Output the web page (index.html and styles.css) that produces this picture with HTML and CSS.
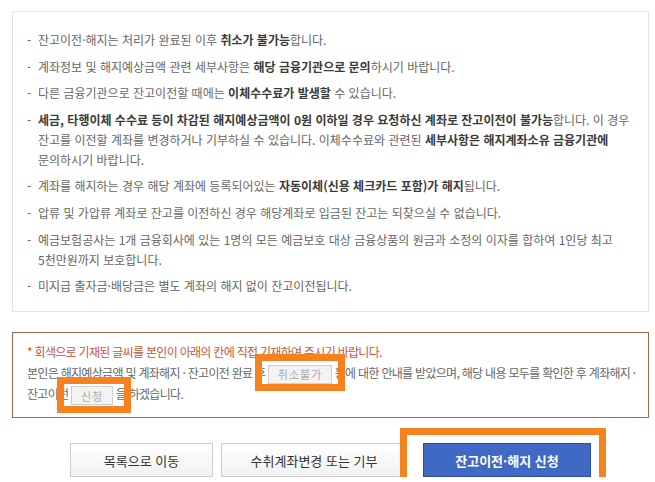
FILE: index.html
```html
<!DOCTYPE html>
<html lang="ko">
<head>
    <meta charset="UTF-8" />
    <title>잔고이전·해지 신청</title>
    <link rel="stylesheet" href="styles.css">
</head>
<body>
<div class="page">
    <div class="notice">
        <ul>
            <li>잔고이전·해지는 처리가 완료된 이후 <b>취소가 불가능</b>합니다.</li>
            <li>계좌정보 및 해지예상금액 관련 세부사항은 <b>해당 금융기관으로 문의</b>하시기 바랍니다.</li>
            <li>다른 금융기관으로 잔고이전할 때에는 <b>이체수수료가 발생할</b> 수 있습니다.</li>
            <li><b>세금, 타행이체 수수료 등이 차감된 해지예상금액이 0원 이하일 경우 요청하신 계좌로 잔고이전이 불가능</b>합니다. 이 경우 잔고를 이전할 계좌를 변경하거나 기부하실 수 있습니다. 이체수수료와 관련된 <b>세부사항은 해지계좌소유 금융기관에</b> 문의하시기 바랍니다.</li>
            <li>계좌를 해지하는 경우 해당 계좌에 등록되어있는 <b>자동이체(신용 체크카드 포함)가 해지</b>됩니다.</li>
            <li>압류 및 가압류 계좌로 잔고를 이전하신 경우 해당계좌로 입금된 잔고는 되찾으실 수 없습니다.</li>
            <li>예금보험공사는 1개 금융회사에 있는 1명의 모든 예금보호 대상 금융상품의 원금과 소정의 이자를 합하여 1인당 최고 5천만원까지 보호합니다.</li>
            <li>미지급 출자금·배당금은 별도 계좌의 해지 없이 잔고이전됩니다.</li>
        </ul>
    </div>

    <div class="agree">
        <p class="agree-tip">* 회색으로 기재된 글씨를 본인이 아래의 칸에 직접 기재하여 주시기 바랍니다.</p>
        <p>본인은 해지예상금액 및 계좌해지 · 잔고이전 완료 후 <span class="mark mark-a"><input type="text" class="fill fill-wide" placeholder="취소불가" /></span> 등에 대한 안내를 받았으며, 해당 내용 모두를 확인한 후 계좌해지 · 잔고이전 <span class="mark mark-b"><input type="text" class="fill" placeholder="신청" /></span> 을 하겠습니다.</p>
    </div>

    <div class="btn-area">
        <button type="button" class="btn">목록으로 이동</button>
        <button type="button" class="btn btn-change">수취계좌변경 또는 기부</button>
        <span class="mark mark-c"><button type="button" class="btn btn-primary">잔고이전·해지 신청</button></span>
    </div>
</div>
</body>
</html>
```

FILE: styles.css
```css
body {
    margin: 0;
    background-color: #fff;
    color: #666;
    font-family: "Noto Sans CJK KR", "Noto Sans", sans-serif;
    font-size: 12px;
    word-break: keep-all;
}

.page {
    width: 637px;
    padding: 11px 0 0 12px;
}

.notice {
    border: 1px solid #e3e3e3;
    padding: 18px 12px 15px 14px;
}

.notice ul {
    list-style: none;
    margin: 0;
    padding: 0;
    display: flex;
    flex-direction: column;
    gap: 6.6px;
}

.notice li {
    line-height: 20px;
    padding-left: 11px;
    text-indent: -11px;
}

.notice li::before {
    content: "-";
    display: inline-block;
    width: 11px;
    text-indent: 0;
}

.notice b {
    color: #3a3a3a;
}

.agree {
    margin-top: 20px;
    border: 1px solid #a8674b;
    padding: 9px 12px 12px 14px;
    line-height: 20.5px;
    letter-spacing: -0.7px;
}

.agree p {
    margin: 0;
}

.agree-tip {
    color: #c9553a;
}

.fill {
    height: 17px;
    padding: 0;
    border: 1px solid #cfcfcf;
    background-color: #f3f3f3;
    font-family: inherit;
    font-size: 11px;
    letter-spacing: 1px;
    text-align: center;
    vertical-align: middle;
    width: 40px;
}

.fill::placeholder {
    color: #aaa;
}

.fill-wide {
    width: 62px;
}

/* 주황색 표시 박스 */
.mark {
    position: relative;
    display: inline-block;
}

.mark::after {
    content: "";
    position: absolute;
    border: 7px solid #f6821f;
    pointer-events: none;
}

.mark-a::after {
    left: -13px;
    right: -13px;
    top: -9px;
    bottom: -7px;
}

.mark-b::after {
    left: -14px;
    right: -18px;
    top: -7px;
    bottom: -8px;
}

.mark-c::after {
    left: -15px;
    right: -15px;
    top: -15px;
    bottom: -7px;
}

.btn-area {
    margin-top: 25px;
    display: flex;
    justify-content: center;
    align-items: flex-start;
    gap: 8px;
}

.btn {
    height: 34px;
    padding: 0;
    border: 1px solid #cdcdcd;
    background: linear-gradient(#fff, #f1f1f1);
    color: #333;
    font-family: inherit;
    font-size: 13px;
    width: 143px;
}

.btn-change {
    width: 186px;
}

.btn-primary {
    display: block;
    width: 168px;
    margin-left: 8px;
    background: #3f69c5;
    border-color: #2e509e;
    color: #fff;
    font-weight: bold;
}
```
